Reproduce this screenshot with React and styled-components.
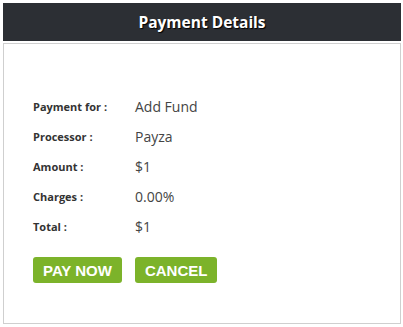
import styled, { createGlobalStyle } from "styled-components";

const GlobalStyle = createGlobalStyle`
  body {
    margin: 0;
    background: #fff;
    font-family: "Open Sans", "Liberation Sans", sans-serif;
  }
`;

const Wrapper = styled.div`
  padding: 3px;
  width: 404px;
  box-sizing: border-box;
`;

const Header = styled.div`
  height: 38px;
  display: flex;
  align-items: center;
  justify-content: center;
  background: #2c2f34;
  color: #fff;
  font-weight: 700;
  font-size: 15.5px;
  text-shadow: 1px 1px 1px #000;
`;

const Panel = styled.div`
  margin-top: 2px;
  height: 281px;
  box-sizing: border-box;
  border: 1px solid #cfcfcf;
  padding: 47px 0 0 29px;
`;

const Row = styled.div`
  display: flex;
  align-items: center;
  height: 30px;
`;

const Label = styled.span`
  width: 102px;
  font-size: 11px;
  font-weight: 700;
  color: #333;
`;

const Value = styled.span`
  font-size: 14px;
  color: #444;
`;

const Actions = styled.div`
  display: flex;
  gap: 13px;
  margin-top: 16px;
`;

const Button = styled.button`
  height: 26px;
  padding: 0 10px;
  border: none;
  border-radius: 3px;
  background: #7cb32a;
  color: #fff;
  font-family: "Liberation Sans", Arial, sans-serif;
  font-weight: 700;
  font-size: 15px;
  text-transform: uppercase;
  cursor: pointer;
`;

const rows = [
  ["Payment for :", "Add Fund"],
  ["Processor :", "Payza"],
  ["Amount :", "$1"],
  ["Charges :", "0.00%"],
  ["Total :", "$1"],
];

const App = () => (
  <>
    <GlobalStyle />
    <Wrapper>
      <Header>Payment Details</Header>
      <Panel>
        {rows.map(([label, value]) => (
          <Row key={label}>
            <Label>{label}</Label>
            <Value>{value}</Value>
          </Row>
        ))}
        <Actions>
          <Button>Pay Now</Button>
          <Button>Cancel</Button>
        </Actions>
      </Panel>
    </Wrapper>
  </>
);

export default App;
